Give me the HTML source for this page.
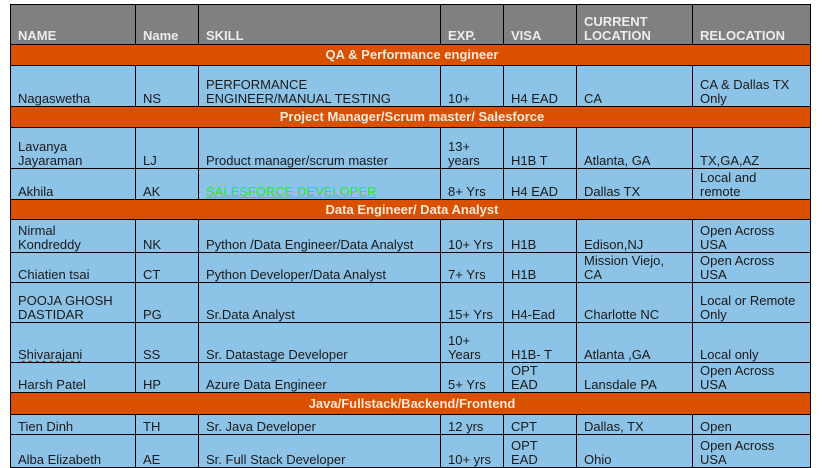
<!DOCTYPE html>
<html><head><meta charset="utf-8"><style>
html,body{margin:0;padding:0;background:#fff;width:832px;height:467px;overflow:hidden}
table{position:absolute;left:10px;top:4px;border-collapse:collapse;table-layout:fixed;font-family:"Liberation Sans",Arial,sans-serif;font-size:13px;color:#1a1a1a}
td{border:1px solid #000;padding:0 4px 0 7px;vertical-align:bottom;line-height:14px;background:#8dc3e7;overflow:hidden;white-space:nowrap}
tr.h td{background:#808080;color:#ececec;font-weight:bold;padding-bottom:1px}
tr.o td{background:#d95000;color:#fde9dc;font-weight:bold;text-align:center;vertical-align:middle}
.g{color:#22ee22;text-decoration:underline}
.sq{text-decoration:underline wavy #d00;text-decoration-thickness:1px}
</style></head><body>
<table>
<colgroup><col style="width:125px"><col style="width:63px"><col style="width:242px"><col style="width:63px"><col style="width:73px"><col style="width:116px"><col style="width:118px"></colgroup>
<tr class="h" style="height:40px"><td>NAME</td><td>Name</td><td>SKILL</td><td>EXP.</td><td>VISA</td><td>CURRENT<br>LOCATION</td><td>RELOCATION</td></tr>
<tr class="o" style="height:21px"><td colspan="7">QA &amp; Performance engineer</td></tr>
<tr style="height:41px"><td>Nagaswetha</td><td>NS</td><td>PERFORMANCE<br>ENGINEER/MANUAL TESTING</td><td>10+</td><td>H4 EAD</td><td>CA</td><td>CA &amp; Dallas TX<br>Only</td></tr>
<tr class="o" style="height:21px"><td colspan="7">Project Manager/Scrum master/ Salesforce</td></tr>
<tr style="height:41px"><td>Lavanya<br>Jayaraman</td><td>LJ</td><td>Product manager/scrum master</td><td>13+<br>years</td><td>H1B T</td><td>Atlanta, GA</td><td>TX,GA,AZ</td></tr>
<tr style="height:31px"><td>Akhila</td><td>AK</td><td><span class="g">SALESFORCE DEVELOPER</span></td><td>8+ Yrs</td><td>H4 EAD</td><td>Dallas TX</td><td>Local and<br>remote</td></tr>
<tr class="o" style="height:20px"><td colspan="7">Data Engineer/ Data Analyst</td></tr>
<tr style="height:33px"><td>Nirmal<br>Kondreddy</td><td>NK</td><td>Python /Data Engineer/Data Analyst</td><td>10+ Yrs</td><td>H1B</td><td>Edison,NJ</td><td>Open Across<br>USA</td></tr>
<tr style="height:30px"><td>Chiatien tsai</td><td>CT</td><td>Python Developer/Data Analyst</td><td>7+ Yrs</td><td>H1B</td><td>Mission Viejo,<br>CA</td><td>Open Across<br>USA</td></tr>
<tr style="height:40px"><td>POOJA GHOSH<br>DASTIDAR</td><td>PG</td><td>Sr.Data Analyst</td><td>15+ Yrs</td><td>H4-Ead</td><td>Charlotte NC</td><td>Local or Remote<br>Only</td></tr>
<tr style="height:40px"><td><span class="sq">Shivarajani</span></td><td>SS</td><td>Sr. Datastage Developer</td><td>10+<br>Years</td><td>H1B- T</td><td>Atlanta ,GA</td><td>Local only</td></tr>
<tr style="height:30px"><td>Harsh Patel</td><td>HP</td><td>Azure Data Engineer</td><td>5+ Yrs</td><td>OPT<br>EAD</td><td>Lansdale PA</td><td>Open Across<br>USA</td></tr>
<tr class="o" style="height:22px"><td colspan="7">Java/Fullstack/Backend/Frontend</td></tr>
<tr style="height:20px"><td>Tien Dinh</td><td>TH</td><td>Sr. Java Developer</td><td>12 yrs</td><td>CPT</td><td>Dallas, TX</td><td>Open</td></tr>
<tr style="height:33px"><td>Alba Elizabeth</td><td>AE</td><td>Sr. Full Stack Developer</td><td>10+ yrs</td><td>OPT<br>EAD</td><td>Ohio</td><td>Open Across<br>USA</td></tr>
</table>
</body></html>
